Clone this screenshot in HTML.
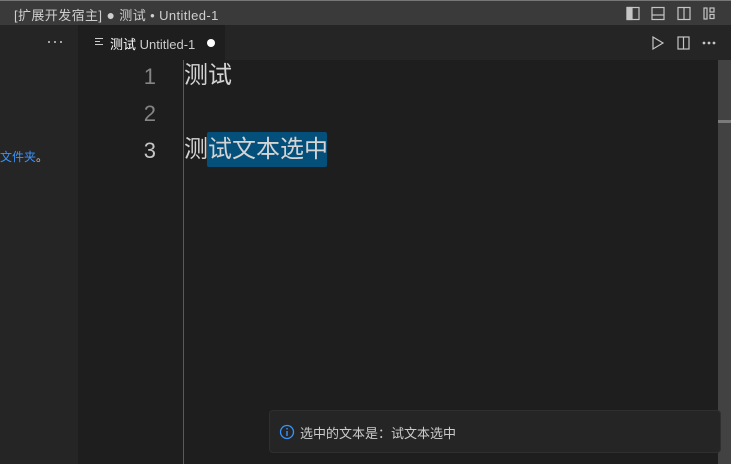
<!DOCTYPE html><html><head><style>
body{margin:0;width:731px;height:464px;overflow:hidden;background:#1e1e1e;font-family:"Liberation Sans","Noto Sans CJK SC",sans-serif;position:relative}
.a{position:absolute}
</style></head><body>
<div class="a" style="left:0;top:0;width:731px;height:25px;background:#3a3a3a;border-top:1px solid #777;box-sizing:border-box"></div>
<div class="a" style="left:14px;top:5px;font-size:13px;color:#cfcfcf;white-space:nowrap;letter-spacing:0.4px">[扩展开发宿主] <span style="font-size:14px">●</span> 测试 • Untitled-1</div>
<svg class="a" style="left:620px;top:5px" width="110" height="16" fill="none" stroke="#c5c5c5" stroke-width="1.2">
<rect x="7" y="2.5" width="12" height="12"/><rect x="7" y="2.5" width="5" height="12" fill="#c5c5c5"/>
<rect x="32" y="2.5" width="12" height="12"/><line x1="32" y1="10" x2="44" y2="10"/>
<rect x="58" y="2.5" width="12" height="12"/><line x1="64" y1="2.5" x2="64" y2="14.5"/>
<rect x="84" y="3" width="3" height="11"/><rect x="90" y="3" width="4" height="4"/><rect x="90" y="9.5" width="4" height="4"/>
</svg>
<div class="a" style="left:0;top:25px;width:78px;height:439px;background:#252526"></div>
<svg class="a" style="left:46px;top:38px" width="20" height="8"><circle cx="3" cy="4" r="1" fill="#ccc"/><circle cx="9" cy="4" r="1" fill="#ccc"/><circle cx="15" cy="4" r="1" fill="#ccc"/></svg>
<div class="a" style="left:0;top:148px;font-size:12px;color:#3794ff">文件夹<span style="color:#ccc">。</span></div>
<div class="a" style="left:78px;top:25px;width:653px;height:35px;background:#252526"></div>
<div class="a" style="left:78px;top:25px;width:147px;height:35px;background:#1e1e1e"></div>
<svg class="a" style="left:94px;top:36px" width="12" height="12" stroke="#ccc" stroke-width="1"><line x1="1" y1="2.5" x2="9" y2="2.5"/><line x1="1" y1="5.5" x2="6" y2="5.5"/><line x1="1" y1="8.5" x2="9" y2="8.5"/></svg>
<div class="a" style="left:110px;top:34px;font-size:13px;color:#fff;white-space:nowrap">测试 <span style="color:#ccc">Untitled-1</span></div>
<div class="a" style="left:207px;top:39px;width:8px;height:8px;border-radius:50%;background:#fff"></div>
<svg class="a" style="left:648px;top:34px" width="80" height="18" fill="none" stroke="#c5c5c5" stroke-width="1.2">
<path d="M5 3 L15 9 L5 15 Z"/><rect x="30" y="3" width="11" height="12"/><line x1="35.5" y1="3" x2="35.5" y2="15"/>
<circle cx="56" cy="9" r=".8" fill="#c5c5c5"/><circle cx="61" cy="9" r=".8" fill="#c5c5c5"/><circle cx="66" cy="9" r=".8" fill="#c5c5c5"/>
</svg>
<div class="a" style="left:183px;top:60px;width:1px;height:404px;background:#5a5a5a"></div>
<div class="a" style="left:718px;top:60px;width:13px;height:404px;background:#424242"></div>
<div class="a" style="left:718px;top:120px;width:13px;height:3px;background:#7a7a7a"></div>
<div class="a" style="left:207px;top:132px;width:120px;height:35px;background:#04507a;border-radius:2px"></div>
<div class="a" style="left:120px;top:58px;width:36px;font-size:22px;line-height:37px;color:#858585;text-align:right">1<br>2<br><span style="color:#c6c6c6">3</span></div>
<div class="a" style="left:184px;top:57px;font-size:24px;line-height:37px;color:#d4d4d4;white-space:nowrap">测试<br><br>测试文本选中</div>
<div class="a" style="left:269px;top:410px;width:452px;height:43px;background:#252526;border:1px solid #2f2f2f;border-radius:4px;box-sizing:border-box"></div>
<svg class="a" style="left:279px;top:424px" width="16" height="16"><circle cx="8" cy="8" r="6.5" fill="none" stroke="#3794ff" stroke-width="1.3"/><rect x="7.3" y="7" width="1.4" height="5" fill="#3794ff"/><rect x="7.3" y="4" width="1.4" height="1.5" fill="#3794ff"/></svg>
<div class="a" style="left:300px;top:423px;font-size:13px;color:#ccc">选中的文本是：试文本选中</div>
</body></html>
